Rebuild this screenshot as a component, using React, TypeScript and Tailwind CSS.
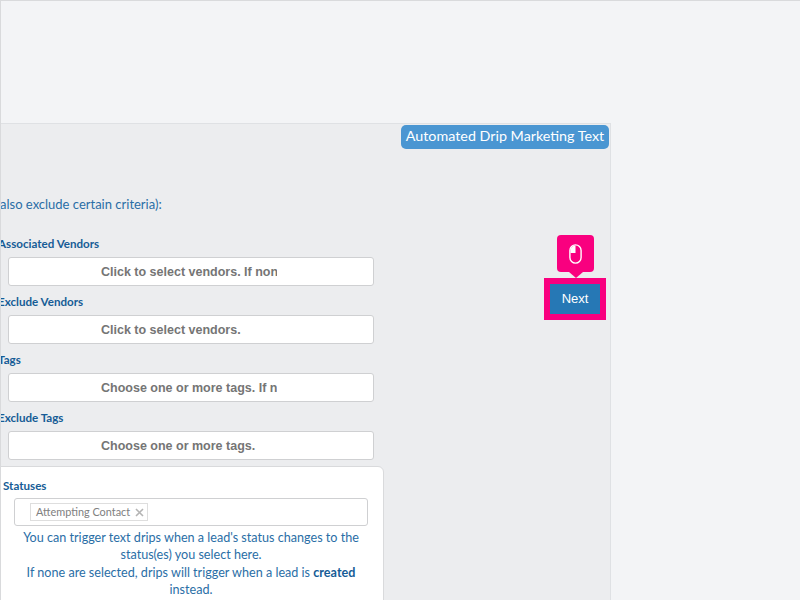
import React from "react";

const font = { fontFamily: "Lato, 'Noto Sans', sans-serif" };

function Row({ label, text }: { label: string; text: string }) {
  return (
    <div className="flex flex-col h-[58px]">
      <div className="h-[20px] leading-[20px] text-[11.6px] font-bold text-[#165c96] whitespace-nowrap -ml-[2px]">{label}</div>
      <div className="mt-[3px] ml-[8px] w-[366px] h-[29px] bg-white border border-[#cfd0d2] rounded-[3px] flex items-center overflow-hidden pl-[92px] pt-[2px]">
        <span className="w-[176px] overflow-hidden whitespace-nowrap text-[12.5px] font-bold text-[#757575] text-left" style={{ fontFamily: "'Liberation Sans', sans-serif" }}>{text}</span>
      </div>
    </div>
  );
}

export default function App() {
  return (
    <div className="w-[800px] h-[600px] overflow-hidden bg-[#f3f4f6] border-t border-l border-[#d9dadc] text-[#1f639d]" style={font}>
      <div className="mt-[122px] w-[611px] h-[478px] -ml-px relative bg-[#ecedef] border-t border-r border-[#dfe1e4] flex flex-col">
        <div className="absolute top-[1px] right-[1px] h-[24px] w-[208px] bg-[#4a96d2] rounded-[5px] text-white text-[14.3px] leading-[22px] text-center whitespace-nowrap">Automated Drip Marketing Text</div>

        <div className="mt-[70px] h-[20px] leading-[20px] text-[13px] text-[#2a6ea6] whitespace-nowrap">also exclude certain criteria):</div>

        <div className="mt-[20px]">
          <Row label="Associated Vendors" text="Click to select vendors. If none" />
          <Row label="Exclude Vendors" text="Click to select vendors." />
          <Row label="Tags" text="Choose one or more tags. If none" />
          <Row label="Exclude Tags" text="Choose one or more tags." />
        </div>

        <div className="-ml-[10px] w-[394px] flex-1 bg-white border border-[#d9dadc] rounded-t-[6px] flex flex-col">
          <div className="mt-[10px] ml-[12px] h-[18px] leading-[18px] text-[11.6px] font-bold text-[#165c96]">Statuses</div>
          <div className="mt-[3px] ml-[23px] w-[354px] h-[28px] border border-[#cfd0d2] rounded-[3px] flex items-center pl-[15px]">
            <span className="h-[18px] w-[118px] border border-[#dedede] bg-white flex items-center pl-[5px] gap-[5px] text-[10.9px] text-[#808080] whitespace-nowrap">
              Attempting Contact
              <svg width="9" height="9" viewBox="0 0 9 9" className="shrink-0"><path d="M1 1 8 8M8 1 1 8" stroke="#b4b4b4" strokeWidth="1.6" /></svg>
            </span>
          </div>
          <div className="mt-[3px] ml-[21px] w-[358px] text-center text-[12.6px] leading-[17.3px] text-[#2a6ea6]">
            <div className="px-[6px]">You can trigger text drips when a lead's status changes to the status(es) you select here.</div>
            <div className="px-[6px]">If none are selected, drips will trigger when a lead is <b className="text-[#165c96]">created</b> instead.</div>
          </div>
        </div>

        <div className="absolute left-[544px] top-[154px] w-[62px] h-[42px] bg-[#f9007f] p-[6px]" style={{ fontFamily: "'Liberation Sans', sans-serif" }}>
          <div className="w-full h-full bg-[#2678b5] text-white text-[13px] flex items-center justify-center">Next</div>
        </div>
        <div className="absolute left-[557px] top-[111px] w-[37px] h-[37px] bg-[#f9007f] rounded-[4px] flex items-center justify-center">
          <svg width="13" height="20" viewBox="0 0 13 20" fill="none">
            <rect x="0.9" y="0.9" width="11.2" height="18.2" rx="5.6" stroke="#fff" strokeWidth="1.4" />
            <path d="M6.5 1.5A5 5 0 0 0 1.5 6.5V9H6.5Z" fill="#fff" />
          </svg>
        </div>
        <div className="absolute left-[569px] top-[148px] w-0 h-0 border-x-[7px] border-x-transparent border-t-[6px] border-t-[#f9007f]" />
      </div>
    </div>
  );
}
